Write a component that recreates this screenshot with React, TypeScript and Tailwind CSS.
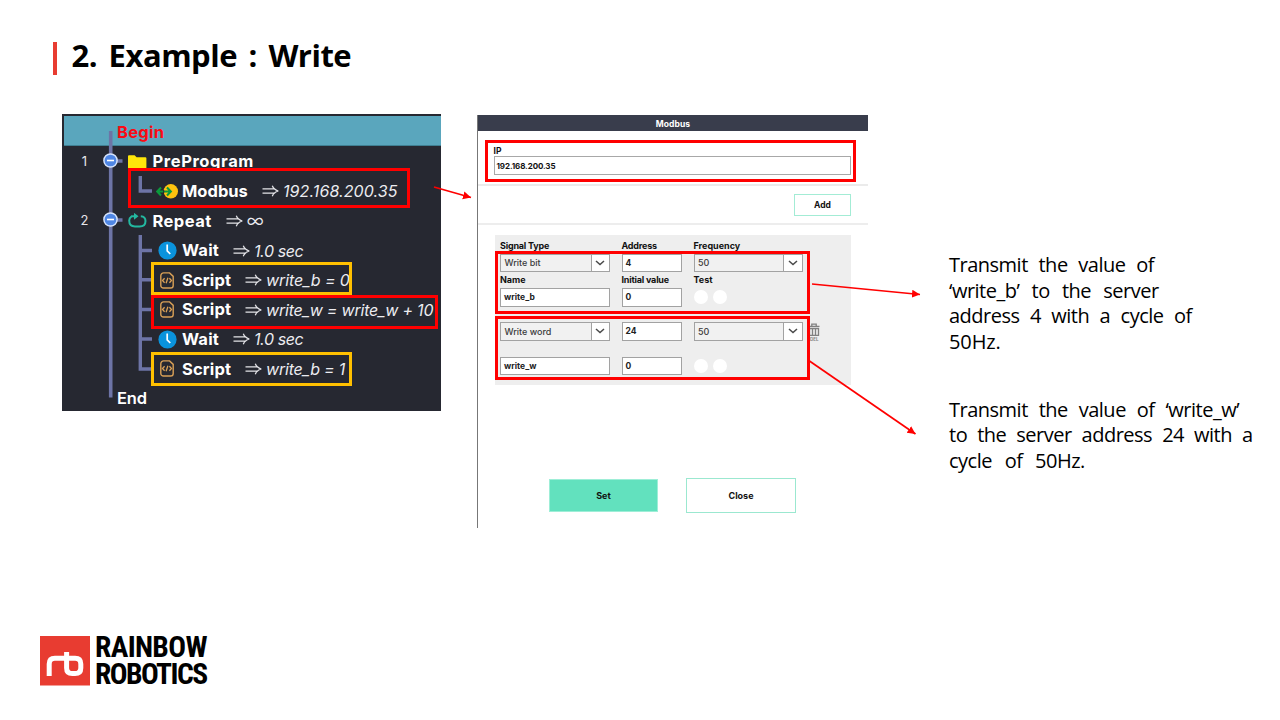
import type { ReactNode } from 'react';

function Implies() {
  return (
    <svg className="ml-[14px] mr-1 h-[12px] w-[17px] shrink-0" viewBox="0 0 17 12" fill="none" stroke="#e4e4e8" strokeWidth="1.25">
      <path d="M0.5 3.8H13.2M0.5 8.2H13.2M10.3 0.8C11.3 3.4 13.2 5.2 16.3 6C13.2 6.8 11.3 8.6 10.3 11.2" />
    </svg>
  );
}

function FolderIcon() {
  return (
    <svg className="h-[14px] w-[19px]" viewBox="0 0 19 14">
      <path d="M0 1.2Q0 .2 1 .2H6.6L8.6 2.3H17.4Q18.4 2.3 18.4 3.3V12.8Q18.4 13.8 17.4 13.8H1Q0 13.8 0 12.8Z" fill="#ffe60a" />
    </svg>
  );
}

function ModbusIcon() {
  return (
    <svg className="h-[15px] w-[22px]" viewBox="0 0 22 15">
      <circle cx="14.8" cy="7.3" r="7.2" fill="#ffc20e" />
      <path d="M1.4 7.5H14.6M5 3.6L1.2 7.5L5 11.4M11 3.6L14.8 7.5L11 11.4" fill="none" stroke="#0b9a3c" strokeWidth="2.1" />
      <path d="M7.7 5.9V9.1" stroke="#262831" strokeWidth="1" />
    </svg>
  );
}

function RepeatIcon() {
  return (
    <svg className="h-[15px] w-[19px]" viewBox="0 0 19 15" fill="none" stroke="#23b8a0" strokeWidth="2">
      <path d="M3.4 3.6C1.8 4.5 1.2 5.8 1.2 7.6C1.2 11.6 3.8 13.5 7 13.5H11.6C15 13.5 17.5 11.6 17.5 8C17.5 5 15.8 3.4 12.8 3.2" />
      <path d="M3 3.3H7" />
      <path d="M6 -.2L10.5 3.3L6 6.8Z" fill="#23b8a0" stroke="none" />
    </svg>
  );
}

function ClockIcon() {
  return (
    <svg className="h-[19px] w-[19px]" viewBox="0 0 19 19">
      <circle cx="9.5" cy="9.5" r="9.1" fill="#0a93dc" />
      <path d="M9.2 3.4V9.8L12.3 13" fill="none" stroke="#fff" strokeWidth="1.7" />
    </svg>
  );
}

function ScriptIcon() {
  return (
    <svg className="h-[17px] w-[14px]" viewBox="0 0 14 17" fill="none" stroke="#d9a057" strokeWidth="1.4">
      <path d="M3.6 .9H9.6L13.2 4.4V13.4A2.6 2.6 0 0 1 10.6 16H3.4A2.6 2.6 0 0 1 .8 13.4V3.7A2.8 2.8 0 0 1 3.6 .9Z" />
      <path d="M4.6 6.2L2.5 8.5L4.6 10.8M9.4 6.2L11.5 8.5L9.4 10.8M7.9 5.8L6.1 11.2" strokeWidth="1.3" />
    </svg>
  );
}

function Row({ n, indent, icon, label, labelClass, value, valueClass }: {
  n?: string; indent: string; icon: ReactNode; label: string; labelClass: string; value?: string; valueClass?: string;
}) {
  return (
    <div className="flex h-[29.6px] items-center whitespace-nowrap">
      <span className="w-[40px] shrink-0 pl-[1px] text-center text-[13px] text-[#e6e6ea]">{n}</span>
      <span className={`flex shrink-0 items-center ${indent}`}>{icon}</span>
      <span className={`shrink-0 text-[16.5px] font-bold text-white ${labelClass}`}>{label}</span>
      {value && <Implies />}
      {value && <span className={`text-[#ececf0] ${valueClass}`}>{value}</span>}
    </div>
  );
}

const L1 = 'ml-[24px] w-[24.5px]';
const L2 = 'ml-[53.5px] w-[24.5px]';
const L2S = 'ml-[52px] w-[26px] pl-[4px]';

function ProgramTree() {
  return (
    <section className="relative h-[297px] w-[379px] shrink-0 bg-[#262831] pl-[2px] pt-[2px] font-[Inter,sans-serif]">
      <div className="flex h-[30px] items-center border-b border-[#3f7f92] bg-[#5aa6bd] pl-[53px] pt-[3px] text-[16.5px] font-bold text-[#fb0a14]">
        <span className="tracking-[0.3px]">Begin</span>
      </div>
      <div className="pt-[1px]">
        <Row n="1" indent={L1} icon={<FolderIcon />} label="PreProgram" labelClass="w-[101px] tracking-[0.6px]" />
        <Row indent="ml-[52px] w-[26px]" icon={<ModbusIcon />} label="Modbus" labelClass="w-[66px]" value="192.168.200.35" valueClass="text-[16px] italic tracking-[0.1px]" />
        <Row n="2" indent={L1} icon={<RepeatIcon />} label="Repeat" labelClass="w-[59px] tracking-[0.45px]" value="∞" valueClass="text-[19px] font-light" />
        <Row indent={L2} icon={<ClockIcon />} label="Wait" labelClass="w-[37px] tracking-[0.2px]" value="1.0 sec" valueClass="text-[16px] italic tracking-[-0.4px]" />
        <Row indent={L2S} icon={<ScriptIcon />} label="Script" labelClass="w-[49px] tracking-[0.15px]" value="write_b = 0" valueClass="text-[16px] italic tracking-[-0.1px]" />
        <Row indent={L2S} icon={<ScriptIcon />} label="Script" labelClass="w-[49px] tracking-[0.15px]" value="write_w = write_w + 10" valueClass="text-[16px] italic tracking-[-0.2px]" />
        <Row indent={L2} icon={<ClockIcon />} label="Wait" labelClass="w-[37px] tracking-[0.2px]" value="1.0 sec" valueClass="text-[16px] italic tracking-[-0.4px]" />
        <Row indent={L2S} icon={<ScriptIcon />} label="Script" labelClass="w-[49px] tracking-[0.15px]" value="write_b = 1" valueClass="text-[16px] italic tracking-[-0.2px]" />
        <div className="flex h-[29.6px] items-center pl-[53px] text-[16.5px] font-semibold text-white">
          <span className="tracking-[-0.2px]">End</span>
        </div>
      </div>
      <svg className="absolute left-0 top-0 h-[297px] w-[379px]" viewBox="0 0 379 297" fill="none" stroke="#6d74a6" strokeWidth="3.6">
        <path d="M48.7 17V283.5M48 47H60.5M48 106H60.5" />
        <path d="M78.3 62V77H90M78.3 121V255H90M78.3 136.5H90M78.3 165.8H90M78.3 195.5H90M78.3 225H90" strokeWidth="3.4" />
        {[46.5, 105.5].map((y) => (
          <g key={y}>
            <circle cx="48.5" cy={y} r="6.6" fill="#4f86e4" stroke="#d5e2fa" strokeWidth="1.5" />
            <path d={`M45 ${y}H52`} stroke="#fff" strokeWidth="1.6" />
          </g>
        ))}
      </svg>
      <div className="absolute left-[66px] top-[54px] h-[40px] w-[282px] border-3 border-[#ff0000]" />
      <div className="absolute left-[89px] top-[148px] h-[33px] w-[201px] border-3 border-[#ffc000]" />
      <div className="absolute left-[89px] top-[181px] h-[34px] w-[287px] border-3 border-[#ff0000]" />
      <div className="absolute left-[89px] top-[238px] h-[34px] w-[201px] border-3 border-[#ffc000]" />
    </section>
  );
}

function Field({ value }: { value: string }) {
  return <div className="flex h-[18.5px] items-center border border-[#a2a2a2] bg-white pl-[3px] pt-[1px] text-[8.5px] font-bold text-[#222]">{value}</div>;
}

function Select({ value }: { value: string }) {
  return (
    <div className="flex h-[18.5px] items-center border border-[#a2a2a2] bg-[#f1f1f1] pl-[3.5px] text-[9px] font-medium text-[#3c3c3c]">
      <span className="grow">{value}</span>
      <span className="flex h-full w-[18.5px] items-center justify-center border-l border-[#a2a2a2] bg-white">
        <svg className="h-[6px] w-[10px]" viewBox="0 0 10 6" fill="none" stroke="#4a4a4a" strokeWidth="1.5">
          <path d="M1 1L5 4.6L9 1" />
        </svg>
      </span>
    </div>
  );
}

function Dots() {
  return (
    <div className="flex h-[18.5px] items-center gap-[5px]">
      <span className="h-[14px] w-[14px] rounded-full bg-white" />
      <span className="h-[14px] w-[14px] rounded-full bg-white" />
    </div>
  );
}

const COLS = 'grid grid-cols-[110px_60.5px_109px] gap-x-[11.5px]';

function ModbusDialog() {
  return (
    <section className="relative flex h-[413px] w-[391px] shrink-0 flex-col border-l border-[#777] bg-white font-[Inter,sans-serif] text-[9px] font-bold text-[#111]">
      <h2 className="flex h-[16px] shrink-0 items-center justify-center bg-[#393d4c] pt-[2px] text-[8.5px] text-white"><span className="tracking-[0.1px]">Modbus</span></h2>
      <div className="h-[55px] shrink-0 border-b-2 border-[#ebebeb] pl-[15.5px] pr-[17px] pt-[14px]">
        <div className="h-[11px] pt-[1px] text-[8.5px] leading-[11px]">IP</div>
        <div className="flex h-[18.5px] items-center border border-[#a8a8a8] pl-[2px] pt-[1px] text-[8px] tracking-[-0.1px]">192.168.200.35</div>
      </div>
      <div className="flex h-[39px] shrink-0 items-center justify-end border-b-2 border-[#ededed] pr-[17px]">
        <div className="flex h-[22px] w-[57px] items-center justify-center border border-[#a3ecd5] pt-[1px] text-[8.5px]">Add</div>
      </div>
      <div className="ml-[16.5px] mt-[10px] h-[150px] w-[356px] shrink-0 bg-[#eee] pl-[5.5px] pt-[5px]">
        <div className={`${COLS} h-[13.5px] leading-[12px]`}>
          <span className="tracking-[-0.2px]">Signal Type</span><span className="tracking-[-0.2px]">Address</span><span>Frequency</span>
        </div>
        <div className={COLS}><Select value="Write bit" /><Field value="4" /><Select value="50" /></div>
        <div className={`${COLS} h-[16px] pt-[2px] leading-[12px]`}>
          <span>Name</span><span className="tracking-[-0.2px]">Initial value</span><span>Test</span>
        </div>
        <div className={COLS}><Field value="write_b" /><Field value="0" /><Dots /></div>
        <div className={`${COLS} mt-[15.5px]`}><Select value="Write word" /><Field value="24" /><Select value="50" /></div>
        <div className={`${COLS} mt-[16px]`}><Field value="write_w" /><Field value="0" /><Dots /></div>
      </div>
      <div className="mt-[93px] flex items-center gap-[28px] pl-[71px]">
        <div className="flex h-[33px] w-[109px] items-center justify-center border border-[#9eeed7] bg-[#62e1be] pt-[1px]">Set</div>
        <div className="flex h-[35px] w-[110px] items-center justify-center border border-[#9be8d0] pt-[1px]">Close</div>
      </div>
      <svg className="absolute left-[330px] top-[208px] h-[19px] w-[12px]" viewBox="0 0 12 19" fill="none" stroke="#808080" strokeWidth="1.3">
        <path d="M.5 3.3H11.5M3.8 3V1.2H8.2V3M1.5 5.5H10.5V12.3H1.5ZM4.5 5V12.5M7.5 5V12.5" />
        <text x="2" y="17.5" fontSize="4.5" fontFamily="Inter" fontWeight="700" fill="#858585" stroke="none">DEL</text>
      </svg>
      <div className="absolute left-[7px] top-[25px] h-[42px] w-[371px] border-3 border-[#ff0000]" />
      <div className="absolute left-[17px] top-[136px] h-[63px] w-[315px] border-3 border-[#ff0000]" />
      <div className="absolute left-[17px] top-[201px] h-[64px] w-[315px] border-3 border-[#ff0000]" />
    </section>
  );
}

function Notes() {
  return (
    <aside className="ml-[81px] mt-[137px] shrink-0 whitespace-nowrap text-[20px] leading-[25.6px] tracking-[-0.5px] text-black">
      <p>
        <span className="block [word-spacing:6px]">Transmit the value of</span>
        <span className="block [word-spacing:7.5px]">‘write_b’ to the server</span>
        <span className="block [word-spacing:5.7px]">address 4 with a cycle of</span>
        <span className="block tracking-[-0.1px]">50Hz.</span>
      </p>
      <p className="mt-[42.5px]">
        <span className="block [word-spacing:6.2px]">Transmit the value of ‘write_w’</span>
        <span className="block [word-spacing:5.3px]">to the server address 24 with a</span>
        <span className="block [word-spacing:8px]">cycle of 50Hz.</span>
      </p>
    </aside>
  );
}

function Logo() {
  return (
    <footer className="flex items-start gap-[5px] pl-[40px]">
      <svg className="h-[50px] w-[50px]" viewBox="0 0 50 50">
        <rect width="50" height="49.5" fill="#e83c31" />
        <path d="M9.2 40V28Q9.2 22.3 14.9 22.3H35.1Q40.8 22.3 40.8 28V32Q40.8 37.6 35.1 37.6H32.3Q26.6 37.6 26.6 32V16" fill="none" stroke="#fff" strokeWidth="5" />
      </svg>
      <div className="-mt-[2.5px] text-[29.5px] font-bold leading-[27px] text-black [font-family:'Roboto_Condensed',Roboto,sans-serif]">
        <div className="tracking-[-0.65px]">RAINBOW</div>
        <div className="tracking-[-1.55px]">ROBOTICS</div>
      </div>
    </footer>
  );
}

export default function App() {
  return (
    <main className="relative flex h-[720px] w-[1280px] flex-col overflow-hidden bg-white [font-family:'Open_Sans',sans-serif]">
      <header className="flex h-[114px] shrink-0 items-start pl-[53px] pt-[41px]">
        <span className="mt-[0.5px] h-[33px] w-[3.5px] bg-[#e83c31]" />
        <h1 className="-mt-px ml-[15px] text-[31px] font-bold leading-[30px] tracking-[-0.5px] text-black [word-spacing:4px]">2. Example : Write</h1>
      </header>
      <div className="flex h-[522px] shrink-0 items-start pl-[62px]">
        <ProgramTree />
        <div className="ml-[36px] mt-[1px] flex items-start">
          <ModbusDialog />
          <Notes />
        </div>
      </div>
      <Logo />
      <svg className="pointer-events-none absolute left-0 top-0 h-[720px] w-[1280px]" viewBox="0 0 1280 720" fill="none" stroke="#ff0000" strokeWidth="1.7">
        <defs>
          <marker id="head" markerUnits="userSpaceOnUse" markerWidth="9" markerHeight="9" refX="8" refY="4" orient="auto">
            <path d="M0 0L8 4L0 8Z" fill="#ff0000" stroke="none" />
          </marker>
        </defs>
        <path d="M434 187L471 197.5" markerEnd="url(#head)" />
        <path d="M812 284L920 294.5" markerEnd="url(#head)" />
        <path d="M808 360L915.5 434" markerEnd="url(#head)" />
      </svg>
    </main>
  );
}
